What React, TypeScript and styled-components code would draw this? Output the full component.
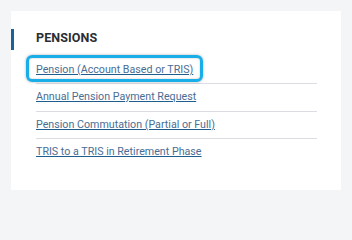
import React from 'react';
import styled, { createGlobalStyle } from 'styled-components';

const links = [
  { label: 'Pension (Account Based or TRIS)', focused: true },
  { label: 'Annual Pension Payment Request', focused: false },
  { label: 'Pension Commutation (Partial or Full)', focused: false },
  { label: 'TRIS to a TRIS in Retirement Phase', focused: false },
];

const GlobalStyle = createGlobalStyle`
  html, body {
    margin: 0;
    background: #f4f5f7;
  }
  body {
    padding: 11px;
    font-family: Roboto, 'Liberation Sans', sans-serif;
  }
`;

const Card = styled.div`
  width: 330px;
  height: 179px;
  background: #ffffff;
  padding-top: 18px;
  box-sizing: border-box;
`;

const Heading = styled.h2`
  margin: 0;
  border-left: 3px solid #1d6196;
  padding: 2px 0 6px 22px;
  font-size: 12.5px;
  line-height: 13px;
  font-weight: 700;
  color: #2a2d33;
  letter-spacing: 0.1px;
`;

const List = styled.ul`
  list-style: none;
  margin: 6.5px 0 0 25px;
  padding: 0;
  width: 281px;
`;

const Row = styled.li`
  display: flex;
  align-items: center;
  height: 26.5px;
  font-size: 10.7px;
  line-height: 12.5px;
  border-bottom: 1px solid #dcdde2;
  &:last-child {
    border-bottom: none;
  }
`;

const Link = styled.a<{ $focused: boolean }>`
  position: relative;
  display: inline-block;
  color: #4a6d94;
  text-decoration: underline;
  text-decoration-color: #1f5d8f;
  text-underline-offset: 1px;
  cursor: pointer;
  &::after {
    content: '';
    display: ${(p) => (p.$focused ? 'block' : 'none')};
    position: absolute;
    top: -8.5px;
    bottom: -6px;
    left: -10px;
    right: -10px;
    border: 3px solid #19aee8;
    border-radius: 6px;
    box-shadow: 0 0 3px rgba(0, 0, 0, 0.3), inset 0 0 2px rgba(0, 0, 0, 0.25);
  }
`;

export default function App() {
  return (
    <>
      <GlobalStyle />
      <Card>
        <Heading>PENSIONS</Heading>
        <List>
          {links.map((l) => (
            <Row key={l.label}>
              <Link $focused={l.focused}>{l.label}</Link>
            </Row>
          ))}
        </List>
      </Card>
    </>
  );
}
